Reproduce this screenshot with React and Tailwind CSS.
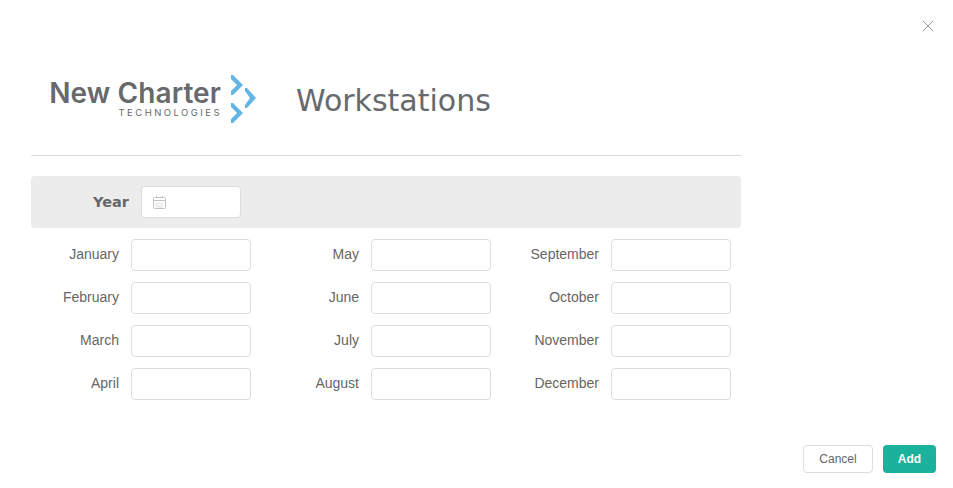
const columns = [
  ["January", "February", "March", "April"],
  ["May", "June", "July", "August"],
  ["September", "October", "November", "December"],
];

function Logo() {
  return (
    <div className="flex items-start w-[206px] h-[50px]">
      <div className="flex flex-col items-end w-[171px] pt-[5px]">
        <div className="font-['Inter',sans-serif] font-semibold text-[28px] leading-[28px] text-[#68696c] whitespace-nowrap tracking-[0.1px]">
          New Charter
        </div>
        <div className="font-['Inter',sans-serif] text-[9.5px] leading-[10px] mt-[1px] text-[#68696c] whitespace-nowrap tracking-[2.45px] mr-[-1px]">
          TECHNOLOGIES
        </div>
      </div>
      <svg width="25" height="50" viewBox="0 0 25 50" className="ml-[10px] shrink-0">
        <g fill="#62b5e5">
          <path d="M0 1 L2 1 L12 11 L2 21 L0 21 L0 17 L6 11 L0 5 Z" />
          <path d="M14 14 L16 14 L25 24 L16 34 L14 34 L14 31 L19 24 L14 17 Z" />
          <path d="M0 29 L2 29 L12 39 L2 49 L0 49 L0 45 L6 39 L0 33 Z" />
        </g>
      </svg>
    </div>
  );
}

function CalendarIcon() {
  return (
    <svg width="13" height="13" viewBox="0 0 13 13" fill="none" stroke="#c3c3c3" strokeWidth="1">
      <rect x="0.5" y="1.5" width="12" height="11" rx="1" />
      <path d="M0.5 4.5 H12.5 M3.5 0 V2 M9.5 0 V2" />
      <path d="M2.5 7 H10.5 M2.5 9 H10.5 M2.5 11 H10.5" strokeDasharray="1 1" />
    </svg>
  );
}

function Field({ label }) {
  return (
    <div className="flex items-center gap-3">
      <label className="w-[88px] pb-[2px] text-right text-sm text-[#666]">{label}</label>
      <input className="w-[120px] h-8 bg-white border border-[#ddd] rounded" />
    </div>
  );
}

export default function App() {
  return (
    <div className="relative w-[953px] h-[488px] bg-white overflow-hidden font-['Liberation_Sans',Arial,sans-serif]">
      <button className="absolute top-[20px] right-[19px] text-[#999]">
        <svg width="12" height="12" viewBox="0 0 12 12" fill="none" stroke="currentColor" strokeWidth="1">
          <path d="M1 1 L11 11 M11 1 L1 11" />
        </svg>
      </button>

      <div className="w-[710px] ml-[31px]">
        <div className="flex items-start h-[156px] pt-[74px] pl-[19px] border-b border-[#ddd]">
          <Logo />
          <h1 className="ml-[40px] mt-[9px] text-[30px] leading-9 text-[#666a6e] font-['DejaVu_Sans',sans-serif]">Workstations</h1>
        </div>

        <div className="flex items-center gap-3 h-[52px] mt-5 bg-[#ececec] rounded">
          <label className="w-[98px] pt-[1px] text-right text-[14.5px] font-bold text-[#666] font-['DejaVu_Sans',sans-serif]">Year</label>
          <div className="flex items-center w-[100px] h-8 pl-[11px] bg-white border border-[#ddd] rounded">
            <CalendarIcon />
          </div>
        </div>

        <div className="flex gap-5 mt-[11px]">
          {columns.map((months) => (
            <div key={months[0]} className="flex flex-col gap-[11px]">
              {months.map((m) => <Field key={m} label={m} />)}
            </div>
          ))}
        </div>
      </div>

      <div className="flex justify-end gap-[10px] mt-[45px] pr-[17px]">
        <button className="w-[70px] h-7 bg-white border border-[#ddd] rounded text-xs text-[#666]">Cancel</button>
        <button className="w-[53px] h-7 bg-[#1ab29c] rounded text-xs font-bold text-white">Add</button>
      </div>
    </div>
  );
}
